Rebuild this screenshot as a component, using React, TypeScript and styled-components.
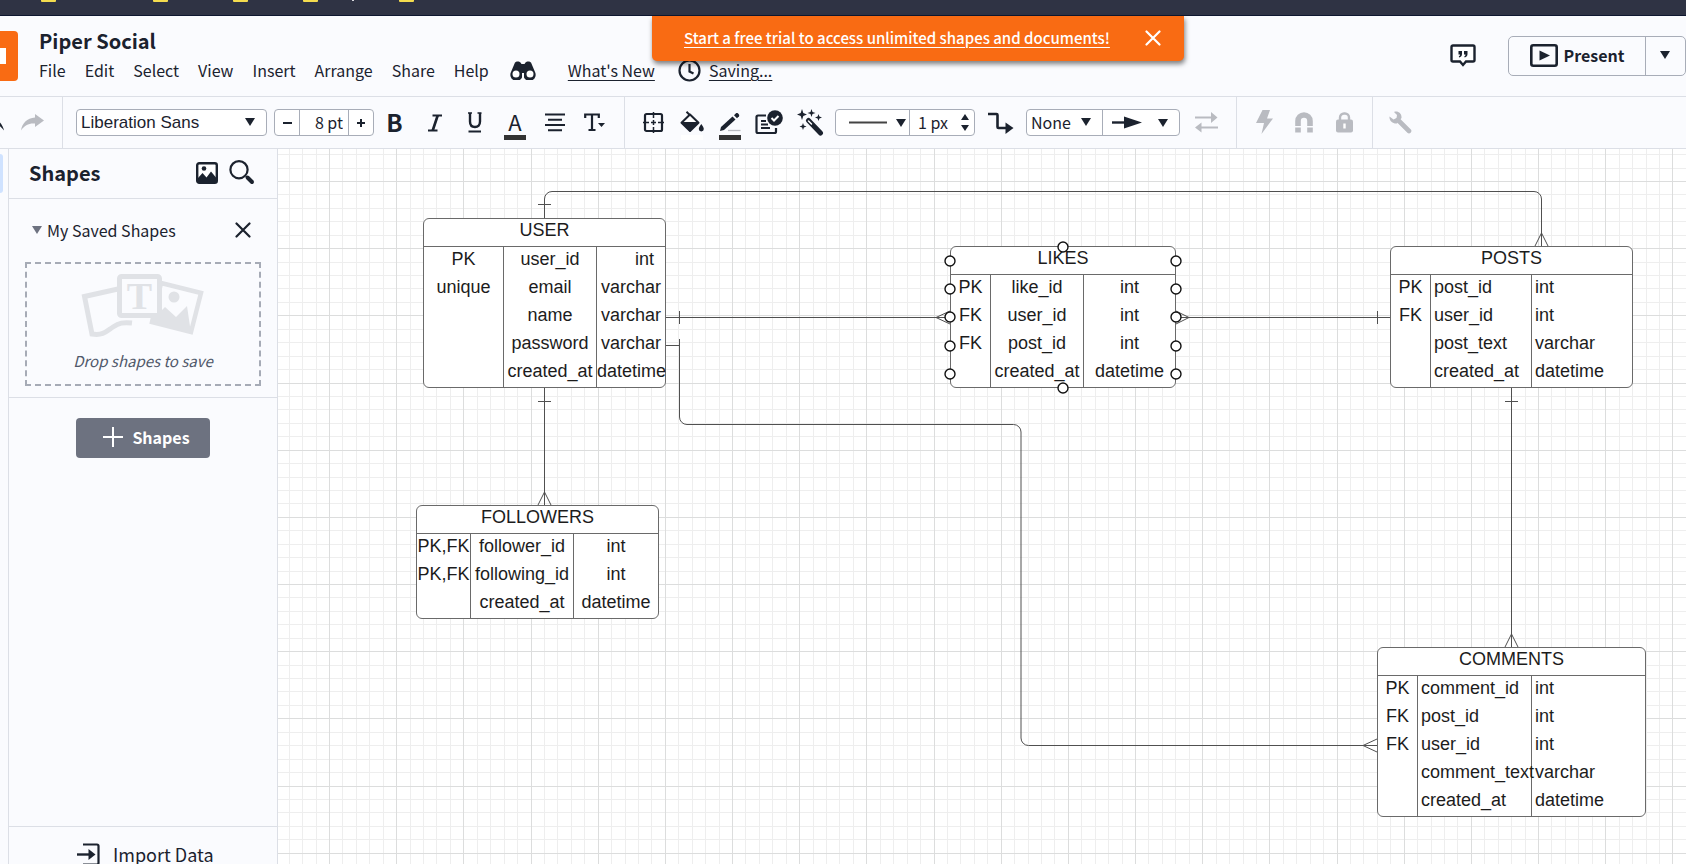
import React from 'react';
import styled, { createGlobalStyle } from 'styled-components';

const ink = '#1b222e';
const line = '#dcdfe6';
const panel = '#fafbfe';
const muted = '#b9bbc1';

const GlobalStyle = createGlobalStyle`
  * { box-sizing: border-box; }
  body { margin: 0; overflow: hidden; }
  body, button, input, select {
    font-family: "Noto Sans CJK SC", "Open Sans", sans-serif;
    color: ${ink};
  }
  button { border: 0; padding: 0; background: none; cursor: pointer; }
  svg { display: block; flex: none; }
`;

/* ---------- page frame ---------- */

const Page = styled.div`
  height: 100vh;
  display: flex;
  flex-direction: column;
  background: ${panel};
`;

const BrowserStrip = styled.div`
  flex: 0 0 16px;
  overflow: hidden;
  background: #2f3344;
  border-bottom: 1px solid #0e1730;
`;

const Header = styled.header`
  position: relative;
  flex: 0 0 80px;
  display: flex;
  align-items: flex-start;
`;

const Logo = styled.a`
  flex: 0 0 18px;
  height: 50px;
  margin-top: 15px;
  display: flex;
  align-items: center;
  background: #f96b13;
  border-radius: 0 4px 4px 0;
`;

const LogoMark = styled.span`
  width: 6px;
  height: 16px;
  background: #fff;
`;

const TitleBlock = styled.div`
  flex: 1;
  padding: 11px 0 0 21px;
`;

const DocTitle = styled.h1`
  margin: 0;
  font-size: 20px;
  line-height: 28px;
  font-weight: 700;
`;

const MenuRow = styled.nav`
  display: flex;
  align-items: center;
  height: 30px;
`;

const MenuItem = styled.button`
  margin-right: 19px;
  font-size: 16px;
  line-height: 24px;
  white-space: nowrap;
`;

const MenuLink = styled.a`
  color: ${ink};
  font-size: 16px;
  line-height: 24px;
  white-space: nowrap;
  text-decoration: underline;
  text-underline-offset: 3px;
  text-decoration-thickness: 1px;
`;

const IconSlot = styled.span<{ $before: number; $after: number }>`
  margin-left: ${p => p.$before}px;
  margin-right: ${p => p.$after}px;
`;

const Banner = styled.div`
  position: absolute;
  top: 0;
  left: 50%;
  width: 532px;
  height: 45px;
  margin-left: -191px;
  padding: 0 23px 2px 32px;
  display: flex;
  align-items: center;
  justify-content: space-between;
  background: #f96b13;
  border-radius: 0 0 5px 5px;
  box-shadow: 1px 3px 5px rgba(0, 0, 0, 0.5);
`;

const BannerLink = styled.a`
  color: #fff;
  font-size: 15px;
  font-weight: 500;
  line-height: 24px;
  white-space: nowrap;
  text-decoration: underline;
  text-underline-offset: 3px;
  text-decoration-thickness: 1px;
`;

const HeaderActions = styled.div`
  display: flex;
  align-items: center;
  margin-top: 20px;
  gap: 32px;
`;

const PresentGroup = styled.div`
  display: flex;
  height: 40px;
  border: 1px solid #a8adb8;
  border-radius: 5px;
`;

const PresentButton = styled.button`
  width: 136px;
  padding-bottom: 2px;
  display: flex;
  align-items: center;
  justify-content: center;
  gap: 6px;
  font-size: 16px;
  line-height: 24px;
  font-weight: 700;
`;

const PresentMenu = styled.button`
  width: 40px;
  padding: 0 2px 2px 0;
  display: grid;
  place-items: center;
  border-left: 1px solid #a8adb8;
`;

/* ---------- toolbar ---------- */

const Toolbar = styled.div`
  flex: 0 0 53px;
  display: flex;
  align-items: center;
  border-top: 1px solid ${line};
  border-bottom: 1px solid ${line};
  overflow: hidden;
`;

const Divider = styled.span<{ $before: number; $after: number }>`
  flex: 0 0 1px;
  align-self: stretch;
  margin-left: ${p => p.$before}px;
  margin-right: ${p => p.$after}px;
  background: ${line};
`;

const Tool = styled.button<{ $w: number }>`
  flex: 0 0 ${p => p.$w}px;
  height: 36px;
  display: flex;
  align-items: center;
  justify-content: center;
`;

const ClippedTool = styled(Tool)`
  overflow: hidden;
  justify-content: flex-end;
`;

const TextTool = styled(Tool)`
  padding-bottom: 2px;
  font-size: 24px;
  line-height: 34px;
  font-weight: 700;
`;

const ColorTool = styled(Tool)`
  flex-direction: column;
  justify-content: flex-end;
  padding-bottom: 1px;
  font-size: 22px;
  line-height: 24px;
  font-weight: 400;
`;

const Swatch = styled.span<{ $c: string }>`
  flex: none;
  width: 22px;
  height: 5px;
  margin-top: 2px;
  background: ${p => p.$c};
`;

const Field = styled.div<{ $w: number; $before?: number }>`
  position: relative;
  flex: 0 0 ${p => p.$w}px;
  min-width: 0;
  height: 27px;
  margin-left: ${p => p.$before ?? 0}px;
  display: flex;
  align-items: stretch;
  background: #fff;
  border: 1px solid #a8adb8;
  border-radius: 4px;
`;

const FieldPart = styled.button<{ $w: number; $edge?: boolean; $gap?: number; $start?: number }>`
  flex: 0 0 ${p => p.$w}px;
  display: flex;
  align-items: center;
  justify-content: ${p => (p.$start ? 'flex-start' : 'center')};
  padding-left: ${p => p.$start ?? 0}px;
  gap: ${p => p.$gap ?? 0}px;
  border-right: ${p => (p.$edge ? '1px solid #a8adb8' : '0')};
`;

const FieldInput = styled.input<{ $align: string }>`
  flex: 1;
  width: 0;
  min-width: 0;
  border: 0;
  padding: 0 5px 2px 8px;
  background: none;
  font-size: 16px;
  text-align: ${p => p.$align};
  outline: 0;
`;

const Stepper = styled.div`
  flex: 0 0 13px;
  display: flex;
  flex-direction: column;
  align-items: flex-start;
  justify-content: center;
  gap: 5px;
`;

const Edge = styled.span`
  flex: 0 0 1px;
  background: #a8adb8;
`;

const Picker = styled.div`
  position: relative;
  flex: 1;
  display: flex;
`;

const PickerSelect = styled.select<{ $plain?: boolean }>`
  width: 100%;
  appearance: none;
  border: 0;
  padding: 0 0 ${p => (p.$plain ? 0 : 2)}px 4px;
  background: none;
  font-size: ${p => (p.$plain ? 17 : 16)}px;
  ${p => p.$plain && 'font-family: "Liberation Sans", Arial, sans-serif;'}
  outline: 0;
`;

const PickerCaret = styled.span`
  position: absolute;
  right: 11px;
  top: 8px;
  pointer-events: none;
`;

/* ---------- side panel ---------- */

const Workspace = styled.div`
  flex: 1;
  min-height: 0;
  display: flex;
`;

const Rail = styled.div`
  flex: 0 0 9px;
  padding-top: 5px;
  border-right: 1px solid ${line};
`;

const RailActive = styled.div`
  width: 3px;
  height: 39px;
  background: #cfe2ff;
  border-radius: 0 4px 4px 0;
`;

const Side = styled.aside`
  flex: 0 0 269px;
  display: flex;
  flex-direction: column;
  border-right: 1px solid ${line};
`;

const SideHead = styled.div`
  height: 50px;
  padding: 0 22px 2px 20px;
  display: flex;
  align-items: center;
  gap: 11px;
  border-bottom: 1px solid ${line};
`;

const SideTitle = styled.h2`
  flex: 1;
  margin: 0;
  font-size: 20px;
  line-height: 28px;
  font-weight: 700;
`;

const SavedSection = styled.section`
  padding: 19px 16px 11px;
  border-bottom: 1px solid ${line};
`;

const SavedHead = styled.div`
  height: 24px;
  margin-bottom: 20px;
  padding: 0 10px 0 7px;
  display: flex;
  align-items: center;
  gap: 5px;
`;

const SavedTitle = styled.h3`
  flex: 1;
  margin: 0;
  font-size: 16px;
  line-height: 24px;
  font-weight: 400;
`;

const DropZone = styled.div`
  height: 124px;
  padding-top: 10px;
  display: flex;
  flex-direction: column;
  align-items: center;
  gap: 11px;
  border: 2px dashed #a6abb6;
`;

const DropHint = styled.p`
  margin: 0;
  color: #50586a;
  font-size: 15px;
  line-height: 24px;
  font-style: italic;
`;

const AddArea = styled.div`
  flex: 1;
  display: flex;
  justify-content: center;
  align-items: flex-start;
  padding-top: 20px;
`;

const AddButton = styled.button`
  width: 134px;
  height: 40px;
  display: flex;
  align-items: center;
  justify-content: center;
  gap: 9px;
  padding: 0 0 2px 7px;
  border-radius: 4px;
  background: #6d7280;
  color: #fff;
  font-size: 16px;
  font-weight: 700;
`;

const ImportButton = styled.button`
  flex: 0 0 38px;
  padding: 16px 0 0 68px;
  display: flex;
  align-items: flex-start;
  gap: 13px;
  border-top: 1px solid ${line};
  overflow: hidden;
  font-size: 18px;
  line-height: 16px;
  white-space: nowrap;
`;

const ImportLabel = styled.span`
  padding-top: 3px;
`;

/* ---------- canvas ---------- */

const Canvas = styled.main`
  position: relative;
  flex: 1;
  min-width: 0;
  overflow: hidden;
  background: #fff;
`;

const Layer = styled.svg`
  position: absolute;
  inset: 0;
  width: 100%;
  height: 100%;
  pointer-events: none;
`;

const Entity = styled.table<{ $x: number; $y: number; $w: number }>`
  position: absolute;
  left: ${p => p.$x}px;
  top: ${p => p.$y}px;
  width: ${p => p.$w}px;
  table-layout: fixed;
  border-collapse: separate;
  border-spacing: 0;
  background: #fff;
  border: 1px solid #6a6a6a;
  border-radius: 6px;
  font-family: "Liberation Sans", Arial, sans-serif;
  font-size: 18px;
  color: #1c1c1c;
`;

const EntityTitle = styled.th`
  height: 28px;
  padding: 0;
  border-bottom: 1px solid #6a6a6a;
  font-weight: 400;
  line-height: 22px;
  text-align: center;
  vertical-align: top;
`;

const Cell = styled.td<{ $left?: boolean; $indent?: number }>`
  height: 28px;
  padding: 0 0 0 ${p => p.$indent ?? (p.$left ? 3 : 0)}px;
  line-height: 24px;
  vertical-align: top;
  white-space: nowrap;
  text-align: ${p => (p.$left ? 'left' : 'center')};
  & + & { border-left: 1px solid #6a6a6a; }
`;

/* ---------- icons ---------- */

const Caret = ({ c = ink }: { c?: string }) => (
  <svg width="10" height="8" viewBox="0 0 10 8"><path d="M0 0h10L5 8z" fill={c} /></svg>
);

const Cross = ({ c = ink }: { c?: string }) => (
  <svg width="16" height="16" viewBox="0 0 16 16" stroke={c} strokeWidth="2.2" strokeLinecap="round">
    <path d="M1.5 1.5l13 13M14.5 1.5l-13 13" />
  </svg>
);

const StripMarks = () => (
  <svg width="500" height="4" viewBox="0 0 500 4">
    {[41, 153, 233, 303, 399].map(x => <path key={x} d={`M${x} 0h15v1a1 1 0 0 1-1 1h-13a1 1 0 0 1-1-1z`} fill="#f4dc4e" />)}
    <path d="M352 0h2v1h-2z" fill="#d8d8de" />
  </svg>
);

const Binoculars = () => (
  <svg width="26" height="19" viewBox="0 0 26 19">
    <path d="M5 1.5C6 0 9.5 0 10.5 1.5L11.5 3h3l1-1.5C16.5 0 20 0 21 1.5L25 11a6 6 0 0 1-11 5.5V12h-2v4.5A6 6 0 0 1 1 11z" fill={ink} />
    <circle cx="6" cy="13" r="3.5" fill="#fff" /><circle cx="20" cy="13" r="3.5" fill="#fff" />
  </svg>
);

const Clock = () => (
  <svg width="23" height="23" viewBox="0 0 23 23" fill="none" stroke={ink} strokeWidth="2.2">
    <circle cx="11.5" cy="11.5" r="10" /><path d="M11.5 5v7.500l4 2" />
  </svg>
);

const Comment = () => (
  <svg width="26" height="24" viewBox="0 0 26 24">
    <path d="M3 1.5h20a1.5 1.5 0 0 1 1.5 1.5v13a1.5 1.5 0 0 1-1.5 1.5h-7L13 21l-3-3.5H3A1.5 1.5 0 0 1 1.5 16V3A1.5 1.5 0 0 1 3 1.5z" fill="#fff" stroke={ink} strokeWidth="2.4" />
    <path d="M8.5 7h3.5v3c0 2-1 3-2.8 3.500l-.4-1.200c.8-.3 1.200-.8 1.200-1.800H8.500zM14 7h3.500v3c0 2-1 3-2.800 3.500l-.4-1.200c.8-.3 1.200-.8 1.200-1.800H14z" fill={ink} />
  </svg>
);

const Play = () => (
  <svg width="28" height="23" viewBox="0 0 28 23">
    <rect x="1.3" y="1.3" width="25.4" height="20.4" rx="2" fill="none" stroke={ink} strokeWidth="2.6" />
    <path d="M9.5 6.5l10.5 5-10.5 5z" fill={ink} />
  </svg>
);

const Undo = () => (
  <svg width="23" height="17" viewBox="0 0 23 17"><path d="M8 0L0 6.5 8 13V9.500c6-.5 11 1 15 7C21.500 9 16 4 8 3.500z" fill={ink} /></svg>
);
const Redo = () => (
  <svg width="23" height="17" viewBox="0 0 23 17"><path d="M14 0l9 6.500L14 13V9.500C8 9 3.500 11 0 16.500 1 9.500 6 4 14 3.500z" fill={muted} /></svg>
);

const ItalicIcon = () => (
  <svg width="14" height="18" viewBox="0 0 14 18" fill="none" stroke={ink} strokeWidth="2">
    <path d="M4.500 1.500H14M0 16.500h9.500" /><path d="M9.700 1.500L4.700 16.500" strokeWidth="2.600" />
  </svg>
);
const UnderlineIcon = () => (
  <svg width="16" height="21" viewBox="0 0 16 21" fill="none" stroke={ink}>
    <path d="M1 1h4M10.500 1h4" strokeWidth="1.600" /><path d="M3 1v8.500C3 13 5 15 8 15s5-2 5-5.500V1" strokeWidth="2.400" />
    <path d="M1.500 19.500h12.500" strokeWidth="2" />
  </svg>
);
const AlignIcon = () => (
  <svg width="20" height="19" viewBox="0 0 20 19" stroke={ink} strokeWidth="2">
    <path d="M0 1.500h20M3 6.800h14M0 12h20M3 17.300h14" />
  </svg>
);
const TextOptions = () => (
  <svg width="21" height="19" viewBox="0 0 21 19">
    <path d="M1.200 5V1.500h13.600V5M8 1.500v15.500M4.500 17h7" fill="none" stroke={ink} strokeWidth="2.200" />
    <path d="M14 10h7l-3.500 4z" fill={ink} />
  </svg>
);
const GridIcon = () => (
  <svg width="21" height="21" viewBox="0 0 21 21" fill="none" stroke={ink}>
    <rect x="2" y="2" width="17" height="17" rx="1.500" strokeWidth="2.200" />
    <path d="M10.500 0v6M10.500 15v6M0 10.500h6M15 10.500h6M10.500 8v5M8 10.500h5" strokeWidth="1.500" />
  </svg>
);
const Bucket = () => (
  <svg width="24" height="22" viewBox="0 0 24 22">
    <path d="M6.500 .8l3.500 3.500" stroke={ink} strokeWidth="2" />
    <path d="M10 3.500l8.500 8.200-8.500 8.300-8.500-8.300z" fill="#fff" stroke={ink} strokeWidth="2" strokeLinejoin="round" />
    <path d="M1.500 11h17l-8.500 9.500z" fill={ink} />
    <path d="M21.300 13c1.500 2.300 2.500 3.600 2.500 5a2.500 2.500 0 0 1-5 0c0-1.400 1-2.700 2.500-5z" fill={ink} />
  </svg>
);
const Pen = () => (
  <svg width="22" height="21" viewBox="0 0 22 21">
    <path d="M9 18.500h12.500" stroke={muted} strokeWidth="1.300" />
    <path d="M1 19l1-4L13.500 4.500l3 3L5 18z" fill={ink} /><path d="M15 3.200l2-2c1.500-1 4 1.500 3 3l-2 2z" fill={ink} />
  </svg>
);
const CardCheck = () => (
  <svg width="28" height="25" viewBox="0 0 28 25" fill="none" stroke={ink} strokeWidth="2.200">
    <path d="M11 5.500H3A1.500 1.500 0 0 0 1.500 7v14.500A1.500 1.500 0 0 0 3 23h16.500a1.500 1.500 0 0 0 1.500-1.500V18" />
    <path d="M6 11h5M6 14.500h7M6 18h9" strokeWidth="2" />
    <circle cx="20" cy="8" r="7.800" fill={ink} stroke="none" /><path d="M16.500 8l2.500 2.500 4.500-4.500" stroke="#fff" strokeWidth="2" />
  </svg>
);
const Wand = () => (
  <svg width="27" height="27" viewBox="0 0 27 27" fill={ink}>
    <path d="M5 0l1.300 4L10 5.500 6.300 7 5 11 3.700 7 0 5.500 3.700 4z" />
    <path d="M14.500 0l1 3 3 1-3 1-1 3-1-3-3-1 3-1zM21.500 5l.9 2.600 2.600.9-2.600.9-.9 2.600-.9-2.600-2.600-.9 2.600-.9zM6 14l.9 2.600 2.600.9-2.600.9L6 21l-.9-2.600-2.600-.9 2.600-.9z" />
    <path d="M11.500 11.500l12 12.500" stroke={ink} strokeWidth="5" strokeLinecap="round" />
    <path d="M11.500 12l3 3" stroke="#fff" strokeWidth="1.500" strokeLinecap="round" />
  </svg>
);
const Elbow = () => (
  <svg width="26" height="22" viewBox="0 0 26 22">
    <path d="M0 2h8.500a1 1 0 0 1 1 1v12a1 1 0 0 0 1 1h8" fill="none" stroke={ink} strokeWidth="2.600" /><path d="M17.500 10.500l8 5.500-8 6z" fill={ink} />
  </svg>
);
const LineSample = () => <svg width="38" height="3" viewBox="0 0 38 3"><path d="M0 1.500h38" stroke="#444" strokeWidth="2" /></svg>;
const ArrowSample = () => (
  <svg width="30" height="13" viewBox="0 0 30 13"><path d="M0 6.500h14" stroke={ink} strokeWidth="2.400" /><path d="M12 .5l18 6-18 6z" fill={ink} /></svg>
);
const Swap = () => (
  <svg width="23" height="21" viewBox="0 0 23 21" fill={muted}>
    <path d="M0 4.500h16V0l6.500 5.500L16 11V6.500H0zM23 14.500H6.500V10.500L0 15.500l6.500 5V16.500H23z" />
  </svg>
);
const Bolt = () => <svg width="17" height="26" viewBox="0 0 17 26"><path d="M6.500 0H14l-3 8.500h6L5.500 24 8 13H0z" fill={muted} /></svg>;
const Magnet = () => (
  <svg width="18" height="21" viewBox="0 0 18 21">
    <path d="M3 14V9a6 6 0 0 1 12 0v5M3 15.500V20.500M15 15.500v5" fill="none" stroke={muted} strokeWidth="5.600" />
  </svg>
);
const Lock = () => (
  <svg width="17" height="21" viewBox="0 0 17 21">
    <path d="M4 9V5.500a4 4 0 0 1 4-4h1a4 4 0 0 1 4 4V9" fill="none" stroke={muted} strokeWidth="2.400" />
    <rect x="0" y="7.500" width="17" height="13" rx="2" fill={muted} /><path d="M8.500 11.500v5" stroke="#fff" strokeWidth="2.400" />
  </svg>
);
const Wrench = () => (
  <svg width="23" height="23" viewBox="0 0 23 23">
    <path d="M9 9l11 11" stroke={muted} strokeWidth="4.600" strokeLinecap="round" />
    <path d="M5 1c4-1.500 8 1.500 7.500 6L8 12.500C4 13 0 10 .5 5.500l4 3L7.500 7l.5-3z" fill={muted} />
  </svg>
);
const Picture = () => (
  <svg width="22" height="22" viewBox="0 0 22 22">
    <rect x="1.200" y="1.200" width="19.600" height="19.600" rx="2" fill="#fff" stroke={ink} strokeWidth="2.400" />
    <circle cx="8" cy="6.500" r="2.300" fill={ink} /><path d="M2 20v-4l4.500-5 4 4.500L15 9.500l5 6V20z" fill={ink} />
  </svg>
);
const Search = () => (
  <svg width="26" height="25" viewBox="0 0 26 25" fill="none" stroke={ink}>
    <circle cx="10" cy="9.700" r="8.600" strokeWidth="2.200" /><path d="M18.500 17.500l4.500 4.500" strokeWidth="4" strokeLinecap="round" />
  </svg>
);
const DropArt = () => (
  <svg width="124" height="64" viewBox="0 0 124 64">
    <g fill={panel} stroke="#e0e2e6" strokeWidth="5">
      <path d="M37 15L3.500 22.500 11 60c11 2 15-3 21-7 6-4 10-5 19-4" />
      <path d="M80 9l40 10-10 39-39-10z" strokeWidth="4.500" />
    </g>
    <path d="M70 47l14-14 11 10 11-11 4 27z" fill="#e0e2e6" /><circle cx="93" cy="23" r="5.500" fill="#e0e2e6" />
    <rect x="38.500" y="2.500" width="40" height="39" rx="2" fill={panel} stroke="#e0e2e6" strokeWidth="5" />
    <text x="58.500" y="35" textAnchor="middle" fontFamily="'Liberation Serif', serif" fontWeight="700" fontSize="38" fill="#e0e2e6">T</text>
  </svg>
);
const Plus = ({ size, c, sw }: { size: number; c: string; sw: number }) => (
  <svg width={size} height={size} viewBox="0 0 20 20" stroke={c} strokeWidth={sw}><path d="M10 0v20M0 10h20" /></svg>
);
const Minus = () => <svg width="9" height="2"><path d="M0 1h9" stroke={ink} strokeWidth="2" /></svg>;
const ImportIcon = () => (
  <svg width="23" height="24" viewBox="0 0 23 24">
    <path d="M6 1.500h14a1.500 1.500 0 0 1 1.500 1.500v17a1.500 1.500 0 0 1-1.500 1.500H6" fill="none" stroke={ink} strokeWidth="2.200" />
    <path d="M0 11.500h12" stroke={ink} strokeWidth="2.400" /><path d="M11.500 6l7 5.500-7 5.500z" fill={ink} />
  </svg>
);

/* ---------- diagram ---------- */

type EntityData = { name: string; x: number; y: number; cols: number[]; left?: boolean; rows: string[][] };

const entities: EntityData[] = [
  { name: 'USER', x: 145, y: 69, cols: [79, 93, 69], rows: [
    ['PK', 'user_id', 'int'], ['unique', 'email', 'varchar'], ['', 'name', 'varchar'], ['', 'password', 'varchar'], ['', 'created_at', 'datetime']] },
  { name: 'FOLLOWERS', x: 138, y: 356, cols: [53, 103, 85], rows: [
    ['PK,FK', 'follower_id', 'int'], ['PK,FK', 'following_id', 'int'], ['', 'created_at', 'datetime']] },
  { name: 'LIKES', x: 672, y: 97, cols: [39, 93, 92], rows: [
    ['PK', 'like_id', 'int'], ['FK', 'user_id', 'int'], ['FK', 'post_id', 'int'], ['', 'created_at', 'datetime']] },
  { name: 'POSTS', x: 1112, y: 97, cols: [39, 101, 101], left: true, rows: [
    ['PK', 'post_id', 'int'], ['FK', 'user_id', 'int'], ['', 'post_text', 'varchar'], ['', 'created_at', 'datetime']] },
  { name: 'COMMENTS', x: 1099, y: 498, cols: [39, 114, 114], left: true, rows: [
    ['PK', 'comment_id', 'int'], ['FK', 'post_id', 'int'], ['FK', 'user_id', 'int'], ['', 'comment_text', 'varchar'], ['', 'created_at', 'datetime']] },
];

const EntityTable = ({ e }: { e: EntityData }) => (
  <Entity $x={e.x} $y={e.y} $w={e.cols.reduce((a, b) => a + b, 2)}>
    <colgroup>{e.cols.map((w, i) => <col key={i} width={w} />)}</colgroup>
    <thead><tr><EntityTitle colSpan={3}>{e.name}</EntityTitle></tr></thead>
    <tbody>
      {e.rows.map((r, i) => (
        <tr key={i}>
          {r.map((t, j) => (
            <Cell key={j} $left={e.left && j > 0} $indent={e.name === 'USER' && t === 'int' ? 27 : undefined}>{t}</Cell>
          ))}
        </tr>
      ))}
    </tbody>
  </Entity>
);

const STEP = 67.17 / 5;
const gridLines = (count: number, origin: number) =>
  Array.from({ length: count }, (_, i) => ({ at: Math.round(origin + (i - 5) * STEP), major: i % 5 === 0 }));

const Grid = () => (
  <Layer aria-hidden="true" shapeRendering="crispEdges">
    {[false, true].map(major => (
      <g key={String(major)} fill={major ? '#dcdddd' : '#eeeeee'}>
        {gridLines(220, 51).filter(l => l.major === major).map(l => <rect key={l.at} x={l.at} y="0" width="1" height="2000" />)}
        {gridLines(150, 32).filter(l => l.major === major).map(l => <rect key={l.at} x="0" y={l.at} width="3000" height="1" />)}
      </g>
    ))}
  </Layer>
);

const connectors = [
  'M266.5 69V50a7.5 7.5 0 0 1 7.5-7.5H1256a7.5 7.5 0 0 1 7.5 7.5V97M260 55.5h13M1257 97l6.5-13 6.5 13',
  'M388 168.5H672M401.5 162v13M672 162l-14 6.5 14 6.5',
  'M898 168.5h214M1099.5 162v13M898 162l13 6.5-13 6.5',
  'M388 196.5h13.5V268a7.5 7.5 0 0 0 7.5 7.5H735.5a7.5 7.5 0 0 1 7.5 7.5V589a7.5 7.5 0 0 0 7.5 7.5H1099M401.5 190v13M1099 590l-14 6.5 14 6.5',
  'M266.5 239V356M260 252.5h13M260 356l6.5-13 6.5 13',
  'M1233.5 239V498M1227 252.5h13M1227 498l6.5-13 6.5 13',
];

const handles: number[][] = [
  ...[112, 140, 168, 197, 225].flatMap(y => [[672, y], [898, y]]),
  [785, 98], [785, 239],
];

export default function App() {
  return (
    <Page>
      <GlobalStyle />
      <BrowserStrip><StripMarks /></BrowserStrip>
      <Header>
        <Logo href="#" aria-label="Home"><LogoMark /></Logo>
        <TitleBlock>
          <DocTitle>Piper Social</DocTitle>
          <MenuRow>
            {['File', 'Edit', 'Select', 'View', 'Insert', 'Arrange', 'Share', 'Help'].map(m => <MenuItem key={m}>{m}</MenuItem>)}
            <IconSlot $before={2} $after={32}><Binoculars /></IconSlot>
            <MenuLink href="#">What's New</MenuLink>
            <IconSlot $before={23} $after={8}><Clock /></IconSlot>
            <MenuLink href="#">Saving...</MenuLink>
          </MenuRow>
        </TitleBlock>
        <HeaderActions>
          <button aria-label="Comments"><Comment /></button>
          <PresentGroup>
            <PresentButton><Play />Present</PresentButton>
            <PresentMenu aria-label="Present options"><Caret /></PresentMenu>
          </PresentGroup>
        </HeaderActions>
        <Banner>
          <BannerLink href="#">Start a free trial to access unlimited shapes and documents!</BannerLink>
          <button aria-label="Dismiss"><Cross c="#fff" /></button>
        </Banner>
      </Header>

      <Toolbar>
        <ClippedTool $w={4} aria-label="Undo"><Undo /></ClippedTool>
        <Tool $w={56} aria-label="Redo"><Redo /></Tool>
        <Divider $before={2} $after={13} />
        <Field $w={191}>
          <Picker>
            <PickerSelect $plain aria-label="Font"><option>Liberation Sans</option></PickerSelect>
            <PickerCaret><Caret /></PickerCaret>
          </Picker>
        </Field>
        <Field $w={100} $before={7}>
          <FieldPart $w={25} $edge aria-label="Smaller"><Minus /></FieldPart>
          <FieldInput $align="right" aria-label="Font size" defaultValue="8 pt" />
          <Edge />
          <FieldPart $w={24} aria-label="Larger"><Plus size={8} c={ink} sw={5} /></FieldPart>
        </Field>
        <TextTool $w={41} aria-label="Bold">B</TextTool>
        <Tool $w={40} aria-label="Italic"><ItalicIcon /></Tool>
        <Tool $w={40} aria-label="Underline"><UnderlineIcon /></Tool>
        <ColorTool $w={40} aria-label="Text color">A<Swatch $c="#333" /></ColorTool>
        <Tool $w={39} aria-label="Align"><AlignIcon /></Tool>
        <Tool $w={40} aria-label="Text options"><TextOptions /></Tool>
        <Divider $before={10} $after={9} />
        <Tool $w={39} aria-label="Container"><GridIcon /></Tool>
        <ColorTool $w={38} aria-label="Fill color"><Bucket /><Swatch $c="#fff" /></ColorTool>
        <ColorTool $w={38} aria-label="Line color"><Pen /><Swatch $c="#333" /></ColorTool>
        <Tool $w={40} aria-label="Conditional formatting"><CardCheck /></Tool>
        <Tool $w={42} aria-label="Magic styles"><Wand /></Tool>
        <Field $w={140} $before={4}>
          <FieldPart $w={74} $edge $start={13} $gap={9} aria-label="Line style"><LineSample /><Caret /></FieldPart>
          <FieldInput $align="left" aria-label="Line width" defaultValue="1 px" />
          <Stepper>
            <button aria-label="Thicker"><svg width="8" height="6"><path d="M4 0l4 6H0z" fill={ink} /></svg></button>
            <button aria-label="Thinner"><svg width="8" height="6"><path d="M0 0h8L4 6z" fill={ink} /></svg></button>
          </Stepper>
        </Field>
        <Tool $w={51} aria-label="Line shape"><Elbow /></Tool>
        <Field $w={154}>
          <Picker>
            <PickerSelect aria-label="Line start"><option>None</option></PickerSelect>
            <PickerCaret><Caret /></PickerCaret>
          </Picker>
          <Edge />
          <FieldPart $w={76} $start={9} $gap={16} aria-label="Line end"><ArrowSample /><Caret /></FieldPart>
        </Field>
        <Tool $w={52} aria-label="Swap ends"><Swap /></Tool>
        <Divider $before={4} $after={7} />
        <Tool $w={40} aria-label="Actions"><Bolt /></Tool>
        <Tool $w={39} aria-label="Snap"><Magnet /></Tool>
        <Tool $w={42} aria-label="Lock"><Lock /></Tool>
        <Divider $before={7} $after={7} />
        <Tool $w={41} aria-label="Settings"><Wrench /></Tool>
      </Toolbar>

      <Workspace>
        <Rail><RailActive /></Rail>
        <Side>
          <SideHead>
            <SideTitle>Shapes</SideTitle>
            <button aria-label="Images"><Picture /></button>
            <button aria-label="Search"><Search /></button>
          </SideHead>
          <SavedSection>
            <SavedHead>
              <Caret c="#6d7280" />
              <SavedTitle>My Saved Shapes</SavedTitle>
              <button aria-label="Close"><Cross /></button>
            </SavedHead>
            <DropZone><DropArt /><DropHint>Drop shapes to save</DropHint></DropZone>
          </SavedSection>
          <AddArea><AddButton><Plus size={20} c="#fff" sw={2} />Shapes</AddButton></AddArea>
          <ImportButton><ImportIcon /><ImportLabel>Import Data</ImportLabel></ImportButton>
        </Side>
        <Canvas>
          <Grid />
          <Layer aria-hidden="true">
            {connectors.map(d => <path key={d} d={d} fill="none" stroke="#505050" />)}
          </Layer>
          {entities.map(e => <EntityTable key={e.name} e={e} />)}
          <Layer aria-hidden="true">
            {handles.map(([x, y]) => <circle key={`${x}-${y}`} cx={x} cy={y} r="5" fill="#fff" stroke="#111" strokeWidth="1.4" />)}
          </Layer>
        </Canvas>
      </Workspace>
    </Page>
  );
}
